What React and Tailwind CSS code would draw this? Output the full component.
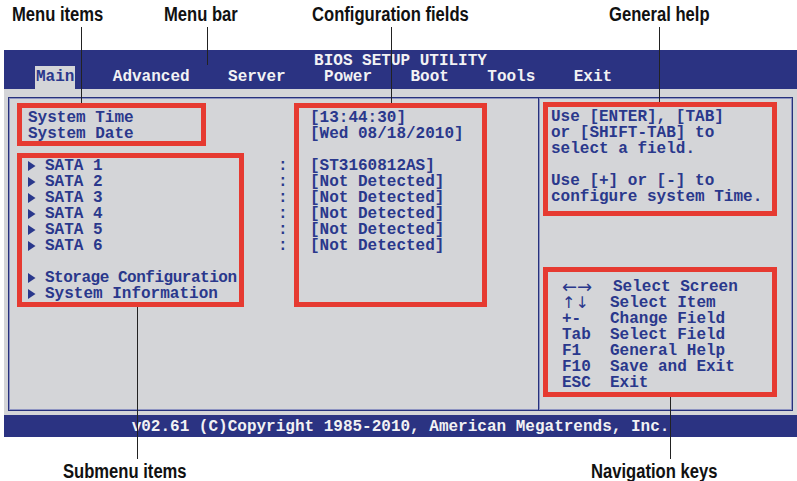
import React from 'react'

const leftRows = [
    { name: 'System Time', value: '[13:44:30]' },
    { name: 'System Date', value: '[Wed 08/18/2010]' },
    { blank: true },
    { name: 'SATA 1', value: '[ST3160812AS]', sub: true },
    { name: 'SATA 2', value: '[Not Detected]', sub: true },
    { name: 'SATA 3', value: '[Not Detected]', sub: true },
    { name: 'SATA 4', value: '[Not Detected]', sub: true },
    { name: 'SATA 5', value: '[Not Detected]', sub: true },
    { name: 'SATA 6', value: '[Not Detected]', sub: true },
    { blank: true },
    { name: 'Storage Configuration', sub: true, noColon: true, tight: true },
    { name: 'System Information', sub: true, noColon: true },
]

const navKeys = [
    { key: 'Tab', desc: 'Select Field' },
    { key: 'F1', desc: 'General Help' },
    { key: 'F10', desc: 'Save and Exit' },
    { key: 'ESC', desc: 'Exit' },
]

const menus = ['Advanced', 'Server', 'Power', 'Boot', 'Tools', 'Exit']

function Arrow() {
    return (
        <svg width="8" height="10" viewBox="0 0 8 10" className="mr-[9px] shrink-0">
            <polygon points="0,0 7.5,5 0,10" fill="#2a388c" />
        </svg>
    )
}

function Label({ className, children }) {
    return (
        <div
            className={`absolute origin-left scale-x-[0.83] font-['Liberation_Sans',Arial,sans-serif] font-bold text-[20px] leading-[20px] text-[#111] whitespace-nowrap ${className}`}
        >
            {children}
        </div>
    )
}

export default function App() {
    return (
        <div className="relative w-[797px] h-[481px] bg-white overflow-hidden pt-[50px] pl-[4px] font-['Liberation_Mono','Courier_New',monospace] font-bold text-[16px] leading-[16px]">
            {/* BIOS screen */}
            <div className="w-[793px] flex flex-col">
                {/* header */}
                <div className="h-[39px] bg-[#2b3382] text-[#f2f2f4] flex flex-col">
                    <div className="text-center pt-[3px] whitespace-pre">BIOS SETUP UTILITY</div>
                    <div className="flex items-start pl-[32px] whitespace-pre">
                        <span className="inline-block h-[23px] -mt-[3px] pt-[3px] px-[1px] -mx-[1px] bg-[#d4d5d8] text-[#2a388c]">
                            Main
                        </span>
                        {menus.map((m) => (
                            <span key={m}>{'    ' + m}</span>
                        ))}
                    </div>
                </div>

                {/* body */}
                <div className="h-[326px] bg-[#d4d5d8] pt-[8px] px-[4px] pb-[4px] text-[#2a388c]">
                    <div className="h-full flex border border-[#27317c] shadow-[inset_1px_1px_0_#8e94c2,inset_-1px_-1px_0_#8e94c2]">
                        {/* left panel */}
                        <div className="w-[529px] pt-[12px] pl-[19px]">
                            {leftRows.map((r, i) =>
                                r.blank ? (
                                    <div key={i} className="h-[16px]" />
                                ) : (
                                    <div key={i} className="flex h-[16px] whitespace-pre">
                                        <div className="w-[250px] flex items-center">
                                            {r.sub && <Arrow />}
                                            <span className={r.tight ? 'tracking-[-0.48px]' : ''}>{r.name}</span>
                                        </div>
                                        <div className="w-[32px]">{r.sub && !r.noColon ? ':' : ''}</div>
                                        <div>{r.value}</div>
                                    </div>
                                ),
                            )}
                        </div>

                        {/* right panel */}
                        <div className="flex-1 flex flex-col border-l border-[#27317c] shadow-[inset_1px_0_0_#8e94c2] pl-[12px] pt-[11px] whitespace-pre">
                            <div>Use [ENTER], [TAB]</div>
                            <div>or [SHIFT-TAB] to</div>
                            <div>select a field.</div>
                            <div className="h-[16px]" />
                            <div>Use [+] or [-] to</div>
                            <div>configure system Time.</div>

                            <div className="mt-[74px] ml-[11px]">
                                <div className="flex h-[16px]">
                                    <div className="w-[48px] font-['DejaVu_Sans',sans-serif] font-normal text-[18px] leading-[16px]">←→</div>
                                    <div className="pl-[3px]">Select Screen</div>
                                </div>
                                <div className="flex h-[16px]">
                                    <div className="w-[48px] font-['DejaVu_Sans',sans-serif] font-normal text-[16px] leading-[16px]">↑↓</div>
                                    <div>Select Item</div>
                                </div>
                                <div className="flex h-[16px]">
                                    <div className="w-[48px]">+-</div>
                                    <div>Change Field</div>
                                </div>
                                {navKeys.map((k) => (
                                    <div key={k.key} className="flex h-[16px]">
                                        <div className="w-[48px]">{k.key}</div>
                                        <div>{k.desc}</div>
                                    </div>
                                ))}
                            </div>
                        </div>
                    </div>
                </div>

                {/* footer */}
                <div className="h-[22px] bg-[#2b3382] text-[#f2f2f4] text-center leading-[24px] whitespace-pre">
                    v02.61 (C)Copyright 1985-2010, American Megatrends, Inc.
                </div>
            </div>

            {/* red callout boxes */}
            <div className="absolute left-[17px] top-[103px] w-[189px] h-[43px] border-[5px] border-[#e63a31]" />
            <div className="absolute left-[17px] top-[153px] w-[227px] h-[154px] border-[5px] border-[#e63a31]" />
            <div className="absolute left-[294px] top-[103px] w-[193px] h-[204px] border-[5px] border-[#e63a31]" />
            <div className="absolute left-[543px] top-[102px] w-[234px] h-[114px] border-[5px] border-[#e63a31]" />
            <div className="absolute left-[543px] top-[267px] w-[234px] h-[130px] border-[5px] border-[#e63a31]" />

            {/* leader lines */}
            <div className="absolute left-[81px] top-[27px] w-[1px] h-[76px] bg-[#222]" />
            <div className="absolute left-[207px] top-[27px] w-[1px] h-[38px] bg-[#222]" />
            <div className="absolute left-[391px] top-[27px] w-[1px] h-[76px] bg-[#222]" />
            <div className="absolute left-[659px] top-[27px] w-[1px] h-[75px] bg-[#222]" />
            <div className="absolute left-[137px] top-[307px] w-[1px] h-[152px] bg-[#222]" />
            <div className="absolute left-[670px] top-[397px] w-[1px] h-[62px] bg-[#222]" />

            {/* labels */}
            <Label className="left-[12px] top-[4px]">Menu items</Label>
            <Label className="left-[164px] top-[4px]">Menu bar</Label>
            <Label className="left-[312px] top-[4px]">Configuration fields</Label>
            <Label className="left-[609px] top-[4px]">General help</Label>
            <Label className="left-[63px] top-[461px]">Submenu items</Label>
            <Label className="left-[591px] top-[461px]">Navigation keys</Label>
        </div>
    )
}
